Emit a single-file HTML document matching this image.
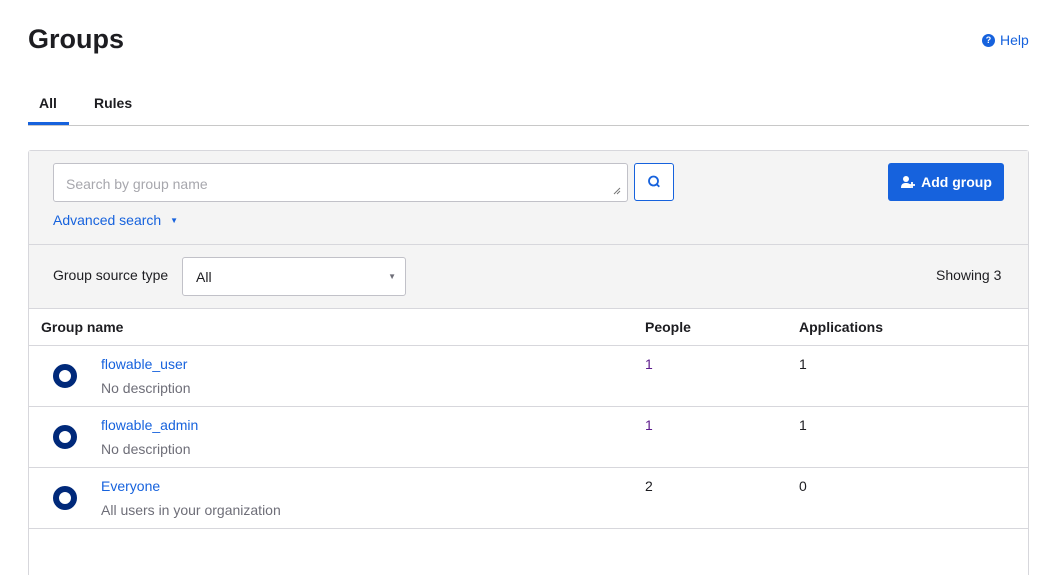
<!DOCTYPE html>
<html style="height:575px;overflow:hidden"><head><meta charset="utf-8"><style>
*{box-sizing:border-box;margin:0;padding:0}
html,body{width:1045px;height:575px;overflow:hidden}
body{background:#fff;font-family:"Liberation Sans",sans-serif;color:#1d1d21;position:relative;font-size:14px}
.a{position:absolute}
.link{color:#1662dd}
</style></head><body>
<div class="a" style="left:28px;top:24px;font-size:27px;font-weight:bold;color:#1d1d21">Groups</div>
<div class="a" style="left:982px;top:32px;font-size:14px;color:#1662dd;display:flex;align-items:center;gap:5px"><span style="width:13px;height:13px;border-radius:50%;background:#1662dd;color:#fff;font-size:9px;font-weight:bold;display:inline-flex;align-items:center;justify-content:center">?</span>Help</div>
<div class="a" style="left:39px;top:95px;font-weight:bold;font-size:14px">All</div>
<div class="a" style="left:94px;top:95px;font-weight:bold;font-size:14px">Rules</div>
<div class="a" style="left:28px;top:122px;width:41px;height:3px;background:#1662dd"></div>
<div class="a" style="left:28px;top:125px;width:1001px;height:1px;background:#c8c8c8"></div>

<div class="a" style="left:28px;top:150px;width:1001px;height:425px;border:1px solid #d7d7dc;border-bottom:none;border-radius:3px 3px 0 0;background:#fff"></div>
<div class="a" style="left:29px;top:151px;width:999px;height:157px;background:#f4f4f4"></div>
<div class="a" style="left:29px;top:244px;width:999px;height:1px;background:#d7d7dc"></div>
<div class="a" style="left:29px;top:308px;width:999px;height:1px;background:#d7d7dc"></div>

<div class="a" style="left:53px;top:163px;width:575px;height:39px;border:1px solid #c1c1c8;border-radius:3px;background:#fff;padding:12px 12px;color:#a7a7ad;font-size:14px">Search by group name
<svg class="a" style="right:6px;bottom:6px" width="8" height="8" viewBox="0 0 8 8"><path d="M1 7L7 1M4 7L7 4" stroke="#777" stroke-width="1"/></svg></div>
<div class="a" style="left:634px;top:163px;width:40px;height:38px;border:1px solid #1662dd;border-radius:3px;background:#fff">
<svg width="38" height="36" viewBox="0 0 38 36"><circle cx="18.5" cy="17" r="4.5" fill="none" stroke="#1662dd" stroke-width="1.8"/><path d="M21.8 20.3l2.5 2.5" stroke="#1662dd" stroke-width="1.8"/></svg></div>
<div class="a link" style="left:53px;top:212px;font-size:14px">Advanced search <span style="font-size:8px;margin-left:5px;vertical-align:2px">▼</span></div>
<div class="a" style="left:888px;top:163px;width:116px;height:38px;background:#1662dd;border-radius:3px;color:#fff;font-weight:bold;font-size:14px;display:flex;align-items:center;justify-content:center;gap:5px">
<svg width="16" height="14" viewBox="0 0 16 14"><circle cx="6" cy="4" r="3" fill="#fff"/><path d="M1 13c0-4 2-5 5-5s5 1 5 5z" fill="#fff"/><path d="M12 7v6M9 10h6" stroke="#fff" stroke-width="1.8"/></svg>Add group</div>

<div class="a" style="left:53px;top:267px;font-size:14px">Group source type</div>
<div class="a" style="left:182px;top:257px;width:224px;height:39px;border:1px solid #c1c1c8;border-radius:3px;background:#fff;padding:11px 13px;font-size:14px">All<span style="position:absolute;right:9px;top:14px;font-size:8px;color:#6e6e78">▼</span></div>
<div class="a" style="left:936px;top:267px;font-size:14px">Showing 3</div>

<div class="a" style="left:41px;top:319px;font-weight:bold;font-size:14px">Group name</div>
<div class="a" style="left:645px;top:319px;font-weight:bold;font-size:14px">People</div>
<div class="a" style="left:799px;top:319px;font-weight:bold;font-size:14px">Applications</div>
<div class="a" style="left:29px;top:345px;width:999px;height:1px;background:#d7d7dc"></div>

<div class="a" style="left:29px;top:406px;width:999px;height:1px;background:#d7d7dc"></div>
<div class="a" style="left:29px;top:467px;width:999px;height:1px;background:#d7d7dc"></div>
<div class="a" style="left:29px;top:528px;width:999px;height:1px;background:#d7d7dc"></div>

<div class="a" style="left:53px;top:364px;width:24px;height:24px;border-radius:50%;border:6px solid #00297a"></div>
<div class="a link" style="left:101px;top:356px">flowable_user</div>
<div class="a" style="left:101px;top:380px;color:#6e6e78">No description</div>
<div class="a" style="left:645px;top:356px;color:#5b1a8c">1</div>
<div class="a" style="left:799px;top:356px">1</div>

<div class="a" style="left:53px;top:425px;width:24px;height:24px;border-radius:50%;border:6px solid #00297a"></div>
<div class="a link" style="left:101px;top:417px">flowable_admin</div>
<div class="a" style="left:101px;top:441px;color:#6e6e78">No description</div>
<div class="a" style="left:645px;top:417px;color:#5b1a8c">1</div>
<div class="a" style="left:799px;top:417px">1</div>

<div class="a" style="left:53px;top:486px;width:24px;height:24px;border-radius:50%;border:6px solid #00297a"></div>
<div class="a link" style="left:101px;top:478px">Everyone</div>
<div class="a" style="left:101px;top:502px;color:#6e6e78">All users in your organization</div>
<div class="a" style="left:645px;top:478px">2</div>
<div class="a" style="left:799px;top:478px">0</div>
</body></html>
